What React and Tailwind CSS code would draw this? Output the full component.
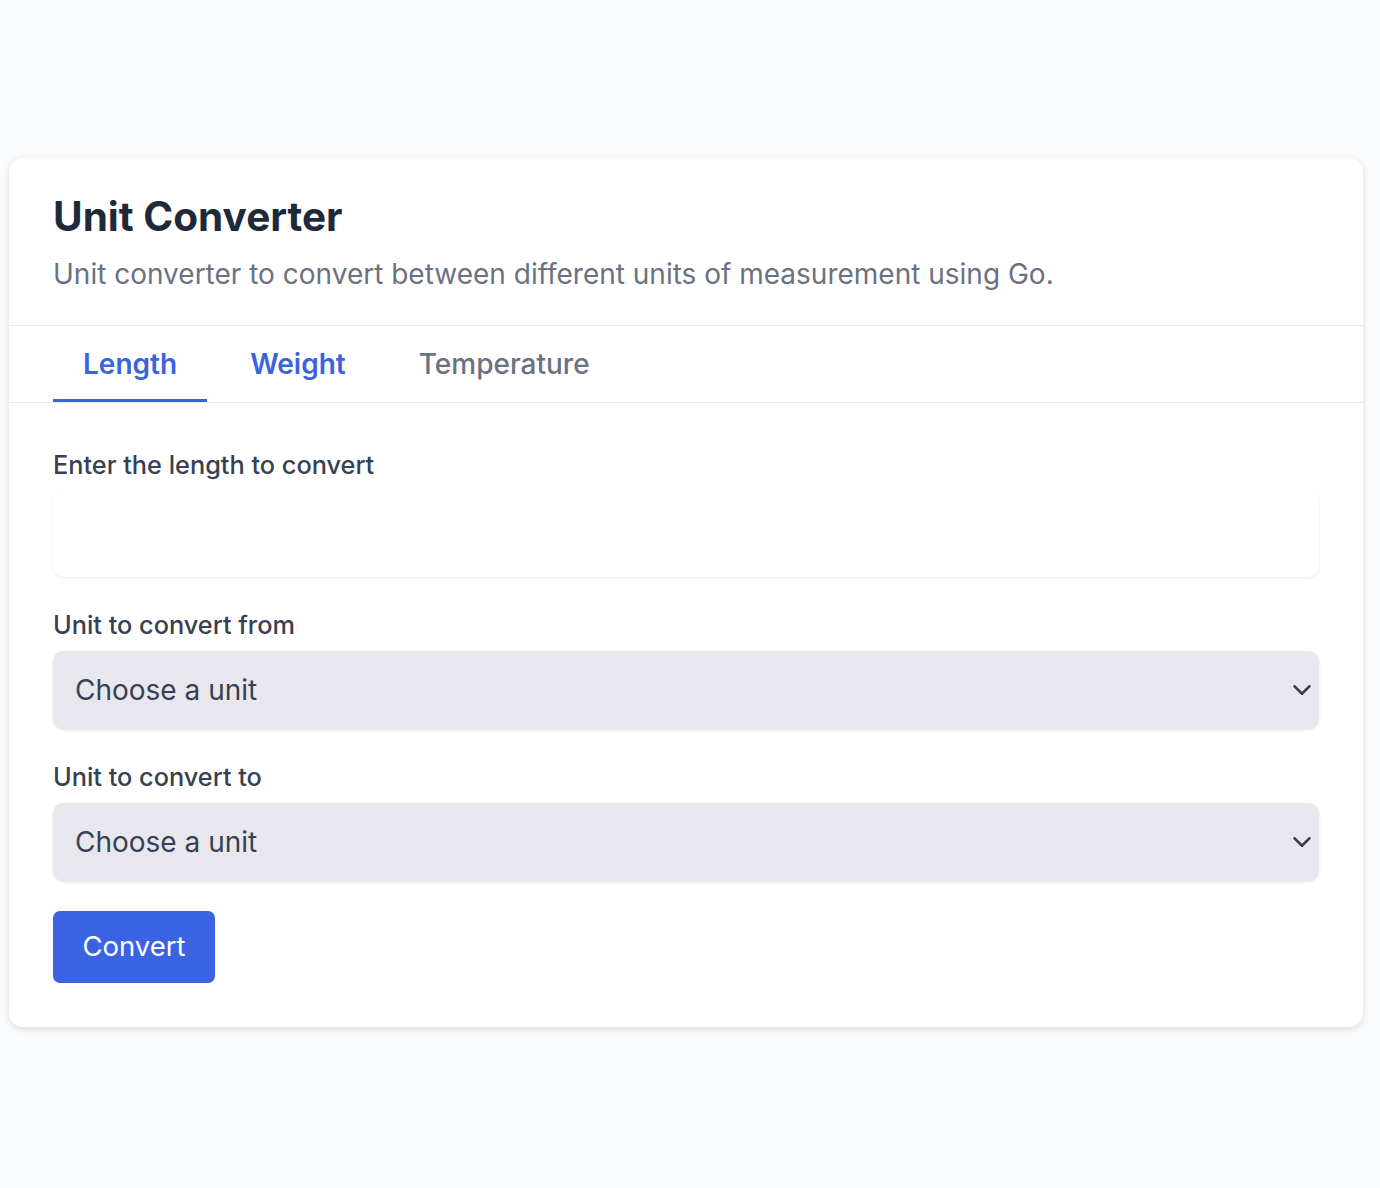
import React, { useState } from 'react';
import { ChevronDown } from 'lucide-react';

const TABS = ['Length', 'Weight', 'Temperature'];

function UnitSelect({ label }) {
  return (
    <div>
      <label className="block text-[25.3px] leading-[30px] font-medium text-gray-700 mb-[11px]">{label}</label>
      <div className="relative">
        <select className="w-full h-[78px] appearance-none rounded-[11px] bg-[#e8e7ed] px-[22px] text-[28px] text-gray-700 shadow-[0_1px_3px_rgba(0,0,0,0.12)] outline-none">
          <option>Choose a unit</option>
        </select>
        <ChevronDown size={30} strokeWidth={2} className="pointer-events-none absolute right-[2px] top-1/2 -translate-y-1/2 text-gray-700" />
      </div>
    </div>
  );
}

export default function App() {
  const [tab, setTab] = useState('Length');

  return (
    <div className="min-h-[1188px] bg-[#f9fafb] pt-[158px] font-['Inter',sans-serif]">
      <div className="ml-[9px] w-[1354px] rounded-[14px] bg-white shadow-[0_2px_6px_rgba(0,0,0,0.12)]">
        <div className="px-[44px] pt-[34px] pb-[33px] border-b border-gray-200">
          <h1 className="text-[40.5px] leading-[50px] font-bold text-gray-800">Unit Converter</h1>
          <p className="mt-[14px] text-[28px] leading-[36px] text-gray-500">Unit converter to convert between different units of measurement using Go.</p>
        </div>
        <div className="flex gap-[13px] px-[44px] border-b border-gray-200">
          {TABS.map((t) => (
            <button
              key={t}
              onClick={() => setTab(t)}
              className={
                t === tab
                  ? 'h-[76px] px-[30px] text-[28px] font-semibold text-[#3b63e0] border-b-[3px] border-[#3b63e0] pt-[3px]'
                  : t === 'Weight'
                  ? 'h-[76px] px-[30px] text-[28px] font-semibold text-[#3b63e0] border-b-[3px] border-transparent pt-[3px]'
                  : 'h-[76px] px-[30px] text-[28px] font-medium text-gray-500 border-b-[3px] border-transparent pt-[3px]'
              }
            >
              {t}
            </button>
          ))}
        </div>
        <div className="px-[44px] pt-[47px] pb-[44px] flex flex-col">
          <div>
            <label className="block text-[25.3px] leading-[30px] font-medium text-gray-700 mb-[12px]">Enter the length to convert</label>
            <input className="w-full h-[85px] rounded-[11px] bg-white px-[22px] text-[28px] shadow-[0_1px_3px_rgba(0,0,0,0.08)] outline-none" />
          </div>
          <div className="mt-[33px]">
            <UnitSelect label="Unit to convert from" />
          </div>
          <div className="mt-[33px]">
            <UnitSelect label="Unit to convert to" />
          </div>
          <div className="mt-[30px]">
            <button className="h-[72px] w-[162px] rounded-[7px] bg-[#3a63e3] text-[27.5px] text-white">Convert</button>
          </div>
        </div>
      </div>
    </div>
  );
}
